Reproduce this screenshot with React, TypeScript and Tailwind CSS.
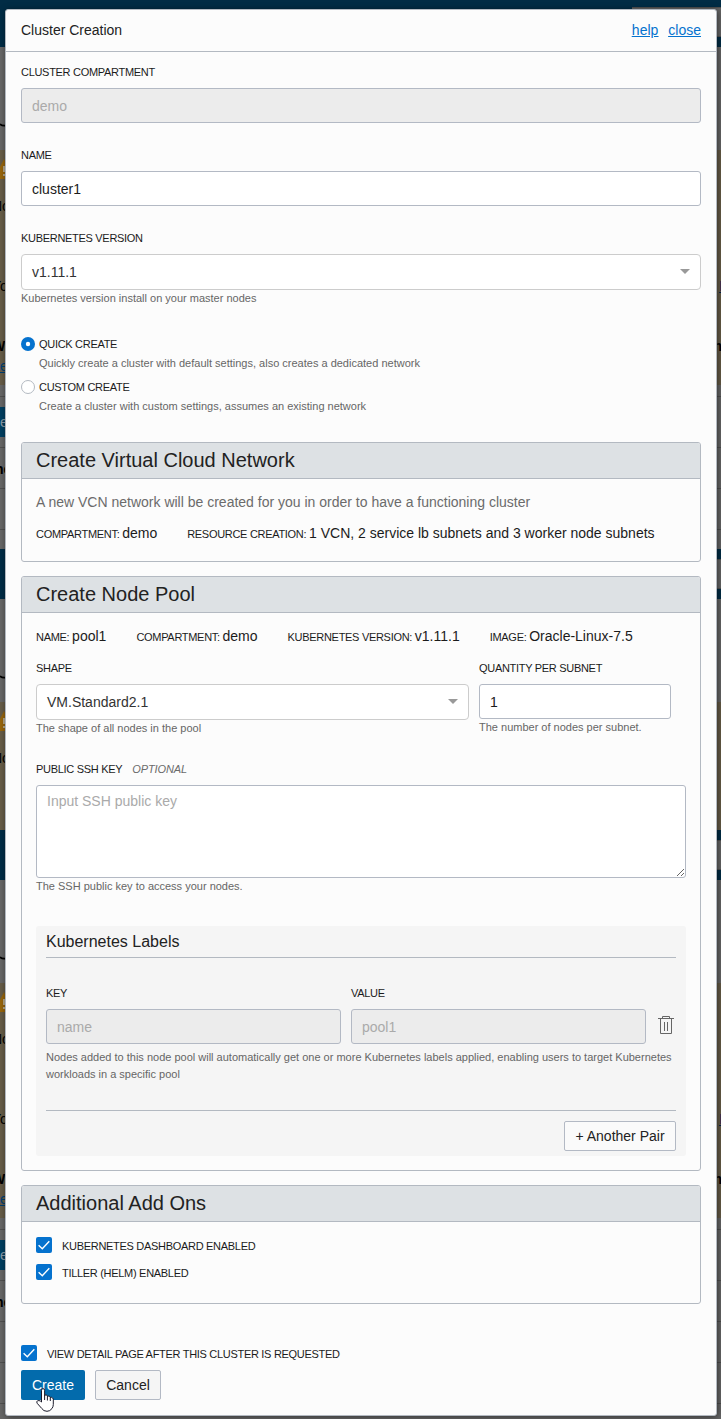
import type { ReactNode } from "react";

function Band({ className, notice, full }: { className: string; notice: string; full?: boolean }) {
  return (
    <div className={`shrink-0 overflow-hidden bg-[#666666] ${className}`}>
      <div className="flex h-[50px] justify-end bg-[#012c45] pt-[10px]">
        <div className="h-[30px] w-[89px] border-y border-[#505050] bg-[#666666]" />
      </div>
      <div className="h-[103px] pt-[75px]">
        <svg className="block" width="6" height="6" viewBox="0 0 6 6">
          <path d="M0 2Q1.500 3.800 5 3.600" fill="none" stroke="#000" strokeWidth="1.800" />
        </svg>
      </div>
      <div className={`overflow-hidden bg-[#665c47] ${notice}`}>
        <svg className="mt-[9px] -ml-[5px] block" width="18" height="20" viewBox="0 0 18 20">
          <path d="M9 0 18 18Q18 20 16 20H2Q0 20 0 18Z" fill="#97650c" />
          <path d="M9 7v6M9 15v2" stroke="#b5a88a" strokeWidth="2" />
        </svg>
        <div className="-ml-[8px] mt-[17px] text-[14px] leading-[20px] text-black">Nc</div>
        <div className="-ml-[8px] mt-[60px] flex justify-between text-[14px] leading-[20px] text-black">
          <span>Yo</span>
          <span className="-mr-[6px] text-[#001f50] underline">L</span>
        </div>
        <div className="-ml-[8px] mt-[40px] flex justify-between text-[14px] leading-[20px] font-bold text-black">
          <span>W</span>
          <span className="-mr-[1px]">n</span>
        </div>
        <div className="text-[14px] leading-[20px] text-[#003e70] underline">e</div>
      </div>
      {full && (
        <div>
          <div className="mt-[11px] h-px bg-[#505050]" />
          <div className="mt-[10px] h-[30px] w-[60px] bg-[#003f60] text-[14px] leading-[30px] text-[#8a9aa5]">e</div>
          <div className="mt-[10px] h-px bg-[#505050]" />
          <div className="-ml-[5px] h-[40px] text-[14px] leading-[42px] font-bold text-black">ne</div>
          <div className="h-px bg-[#505050]" />
          <div className="mt-[40px] h-px bg-[#505050]" />
          <div className="mt-[40px] h-px bg-[#505050]" />
        </div>
      )}
    </div>
  );
}

function Label({ children, className = "" }: { children: ReactNode; className?: string }) {
  return (
    <div className={`h-[16px] text-[11px] leading-[16px] tracking-[-0.3px] whitespace-nowrap text-[#1b1b1b] ${className}`}>{children}</div>
  );
}

function Help({ children, className = "" }: { children: ReactNode; className?: string }) {
  return <div className={`text-[11px] leading-[17px] whitespace-nowrap text-[#666666] ${className}`}>{children}</div>;
}

function Input({ value, disabled, className = "" }: { value: string; disabled?: boolean; className?: string }) {
  return (
    <input
      defaultValue={value}
      disabled={disabled}
      className={`block h-[35px] rounded-[3px] border border-[#b3b9c4] bg-white px-[10px] pt-px text-[14px] text-[#1b1b1b] outline-none disabled:bg-[#ececec] disabled:text-[#aaaaaa] ${className}`}
    />
  );
}

function Select({ value, className = "" }: { value: string; className?: string }) {
  return (
    <div className={`flex h-[36px] items-center justify-between rounded-[4px] border border-[#cccccc] bg-white px-[10px] text-[14px] text-[#333333] ${className}`}>
      <span>{value}</span>
      <svg width="10" height="5" viewBox="0 0 10 5" className="mb-[2px]">
        <path d="M0 0H10L5 5Z" fill="#999999" />
      </svg>
    </div>
  );
}

function Section({ title, className, children }: { title: string; className: string; children: ReactNode }) {
  return (
    <section className={`rounded-[3px] border border-[#b3b9c1] ${className}`}>
      <h2 className="h-[36px] rounded-t-[2px] border-b border-[#b3b9c1] bg-[#dde1e4] pl-[14px] text-[20px] leading-[35px] text-[#222222]">{title}</h2>
      {children}
    </section>
  );
}

function Pair({ name, value }: { name: string; value: string }) {
  return (
    <span className="whitespace-nowrap text-[#1b1b1b]">
      <span className="text-[11px] tracking-[-0.3px]">{name}: </span>
      <span className="text-[14px]">{value}</span>
    </span>
  );
}

function Check({ children, className = "" }: { children: ReactNode; className?: string }) {
  return (
    <div className={`flex h-[16px] items-center gap-[10px] ${className}`}>
      <svg width="16" height="16" viewBox="0 0 16 16" className="shrink-0">
        <rect width="16" height="16" rx="2" fill="#0572ce" />
        <path d="M2.6 8.2 6.3 11.7 13.3 4.2" fill="none" stroke="#fff" strokeWidth="1.4" />
      </svg>
      <Label className="pt-px">{children}</Label>
    </div>
  );
}

function Radio({ checked, children }: { checked?: boolean; children: ReactNode }) {
  return (
    <div className="flex h-[14px] items-center gap-1">
      <svg width="14" height="14" viewBox="0 0 14 14" className="shrink-0">
        {checked ? (
          <>
            <circle cx="7" cy="7" r="7" fill="#0572ce" />
            <circle cx="7" cy="7" r="2.2" fill="#fff" />
          </>
        ) : (
          <circle cx="7" cy="7" r="6.5" fill="#fff" stroke="#b3b9c1" />
        )}
      </svg>
      <Label>{children}</Label>
    </div>
  );
}

export default function App() {
  return (
    <div className="relative h-[1419px] w-[721px] overflow-hidden bg-[#666666] font-['Liberation_Sans',Arial,sans-serif]">
      <div aria-hidden="true" className="flex h-full flex-col">
        <Band className="-mt-[3px] h-[552px]" notice="h-[235px]" full />
        <Band className="h-[281px]" notice="h-[128px]" />
        <Band className="h-[589px]" notice="h-[235px]" full />
      </div>

      <div className="absolute top-[9px] left-[5px] h-[1407px] w-[712px] rounded-[3px] border border-[#b3b9c1] bg-[#fcfcfc] shadow-[1px_1px_6px_rgba(0,0,0,0.5)]">
        <header className="flex h-[42px] items-center justify-between border-b border-[#b3b9c1] px-[15px] text-[14px] text-[#222222]">
          <h1>Cluster Creation</h1>
          <nav className="flex gap-[10px] text-[#0572ce] underline">
            <a>help</a>
            <a>close</a>
          </nav>
        </header>

        <div className="px-[15px] pt-[12px]">
          <Label>CLUSTER COMPARTMENT</Label>
          <Input value="demo" disabled className="mt-[8px] w-full" />

          <Label className="mt-[24px]">NAME</Label>
          <Input value="cluster1" className="mt-[8px] w-full" />

          <Label className="mt-[24px]">KUBERNETES VERSION</Label>
          <Select value="v1.11.1" className="mt-[8px]" />
          <Help>Kubernetes version install on your master nodes</Help>

          <div className="mt-[30px]">
            <Radio checked>QUICK CREATE</Radio>
            <Help className="mt-[4px] pl-[18px]">Quickly create a cluster with default settings, also creates a dedicated network</Help>
            <div className="h-[8px]" />
            <Radio>CUSTOM CREATE</Radio>
            <Help className="mt-[4px] pl-[18px]">Create a cluster with custom settings, assumes an existing network</Help>
          </div>

          <Section title="Create Virtual Cloud Network" className="mt-[27px] h-[120px] text-[14px]">
            <p className="mt-[14px] pl-[14px] leading-[18px] text-[#6b6b6b]">A new VCN network will be created for you in order to have a functioning cluster</p>
            <div className="mt-[13px] flex gap-[30px] pl-[14px] leading-[18px]">
              <Pair name="COMPARTMENT" value="demo" />
              <Pair name="RESOURCE CREATION" value="1 VCN, 2 service lb subnets and 3 worker node subnets" />
            </div>
          </Section>

          <Section title="Create Node Pool" className="mt-[14px] h-[595px]">
            <div className="px-[14px] pt-[14px]">
              <div className="flex gap-[30px] leading-[18px]">
                <Pair name="NAME" value="pool1" />
                <Pair name="COMPARTMENT" value="demo" />
                <Pair name="KUBERNETES VERSION" value="v1.11.1" />
                <Pair name="IMAGE" value="Oracle-Linux-7.5" />
              </div>
              <div className="mt-[14px] flex h-[76px] gap-[10px]">
                <div className="w-[433px]">
                  <Label>SHAPE</Label>
                  <Select value="VM.Standard2.1" className="mt-[8px]" />
                  <Help>The shape of all nodes in the pool</Help>
                </div>
                <div className="w-[192px]">
                  <Label>QUANTITY PER SUBNET</Label>
                  <Input value="1" className="mt-[8px] w-full" />
                  <Help>The number of nodes per subnet.</Help>
                </div>
              </div>
              <Label className="mt-[25px]">
                PUBLIC SSH KEY<span className="ml-[10px] tracking-[-0.1px] text-[#6b6b6b] italic">OPTIONAL</span>
              </Label>
              <textarea
                placeholder="Input SSH public key"
                className="mt-[8px] block h-[93px] w-full rounded-[3px] border border-[#b3b9c4] bg-white px-[10px] py-[6px] text-[14px] leading-[18px] outline-none placeholder:text-[#aaaaaa]"
              />
              <Help>The SSH public key to access your nodes.</Help>

              <div className="mt-[31px] h-[230px] rounded-[3px] bg-[#f5f5f5] px-[10px]">
                <h3 className="h-[32px] border-b border-[#b3b9c1] text-[16px] leading-[31px] text-[#222222]">Kubernetes Labels</h3>
                <div className="mt-[27px] flex gap-[10px]">
                  <div className="w-[295px]">
                    <Label>KEY</Label>
                    <Input value="name" disabled className="mt-[8px] w-full" />
                  </div>
                  <div className="w-[295px]">
                    <Label>VALUE</Label>
                    <Input value="pool1" disabled className="mt-[8px] w-full" />
                  </div>
                  <svg width="18" height="19" viewBox="0 0 18 19" className="mt-[31px] ml-px" fill="none" stroke="#666666">
                    <path d="M1 2.5H17M5.5 2.5V.5H12.5V2.5M3.5 3V17.5H14.5V3M7.5 6V15M10.5 6V15" />
                  </svg>
                </div>
                <Help className="mt-[5px]">
                  Nodes added to this node pool will automatically get one or more Kubernetes labels applied, enabling users to target Kubernetes
                  <br />
                  workloads in a specific pool
                </Help>
                <div className="mt-[27px] flex justify-end border-t border-[#b3b9c1] pt-[10px]">
                  <button className="h-[30px] w-[112px] rounded-[2px] border border-[#b3b9c4] bg-[#fafafa] text-[14px] whitespace-nowrap text-[#222222]">+ Another Pair</button>
                </div>
              </div>
            </div>
          </Section>

          <Section title="Additional Add Ons" className="mt-[14px] h-[119px]">
            <div className="flex flex-col gap-[11px] pt-[15px] pl-[14px]">
              <Check>KUBERNETES DASHBOARD ENABLED</Check>
              <Check>TILLER (HELM) ENABLED</Check>
            </div>
          </Section>

          <Check className="mt-[41px]">VIEW DETAIL PAGE AFTER THIS CLUSTER IS REQUESTED</Check>
          <div className="mt-[9px] flex gap-[10px] text-[14px]">
            <button className="h-[30px] w-[64px] rounded-[2px] bg-[#036bac] text-white">Create</button>
            <button className="h-[30px] w-[66px] rounded-[2px] border border-[#b3b9c4] bg-[#f5f5f5] text-[#222222]">Cancel</button>
          </div>
        </div>
      </div>

      <svg className="absolute top-[1388px] left-[36px]" width="18" height="24" viewBox="0 0 18 24">
        <path
          d="M5.5 14V2.3Q5.5.6 7 .6T8.6 2.3V8Q8.8 6.7 10 6.8T11.4 8.3V9Q11.7 7.8 12.8 8T14.3 9.5V10Q14.6 9 15.6 9.3T17.3 11V16.5Q17.2 19 16 20.5Q14 23.3 11 23.3Q7.5 23.3 5.8 20.5L1.2 15.3Q.1 13.7 1.5 12.8Q3 12.2 4.3 13Z"
          fill="#fff"
          stroke="#1b1b2b"
        />
        <path d="M8.6 8V12M11.4 9V12.5M14.3 10V13" stroke="#1b1b2b" />
      </svg>
    </div>
  );
}
